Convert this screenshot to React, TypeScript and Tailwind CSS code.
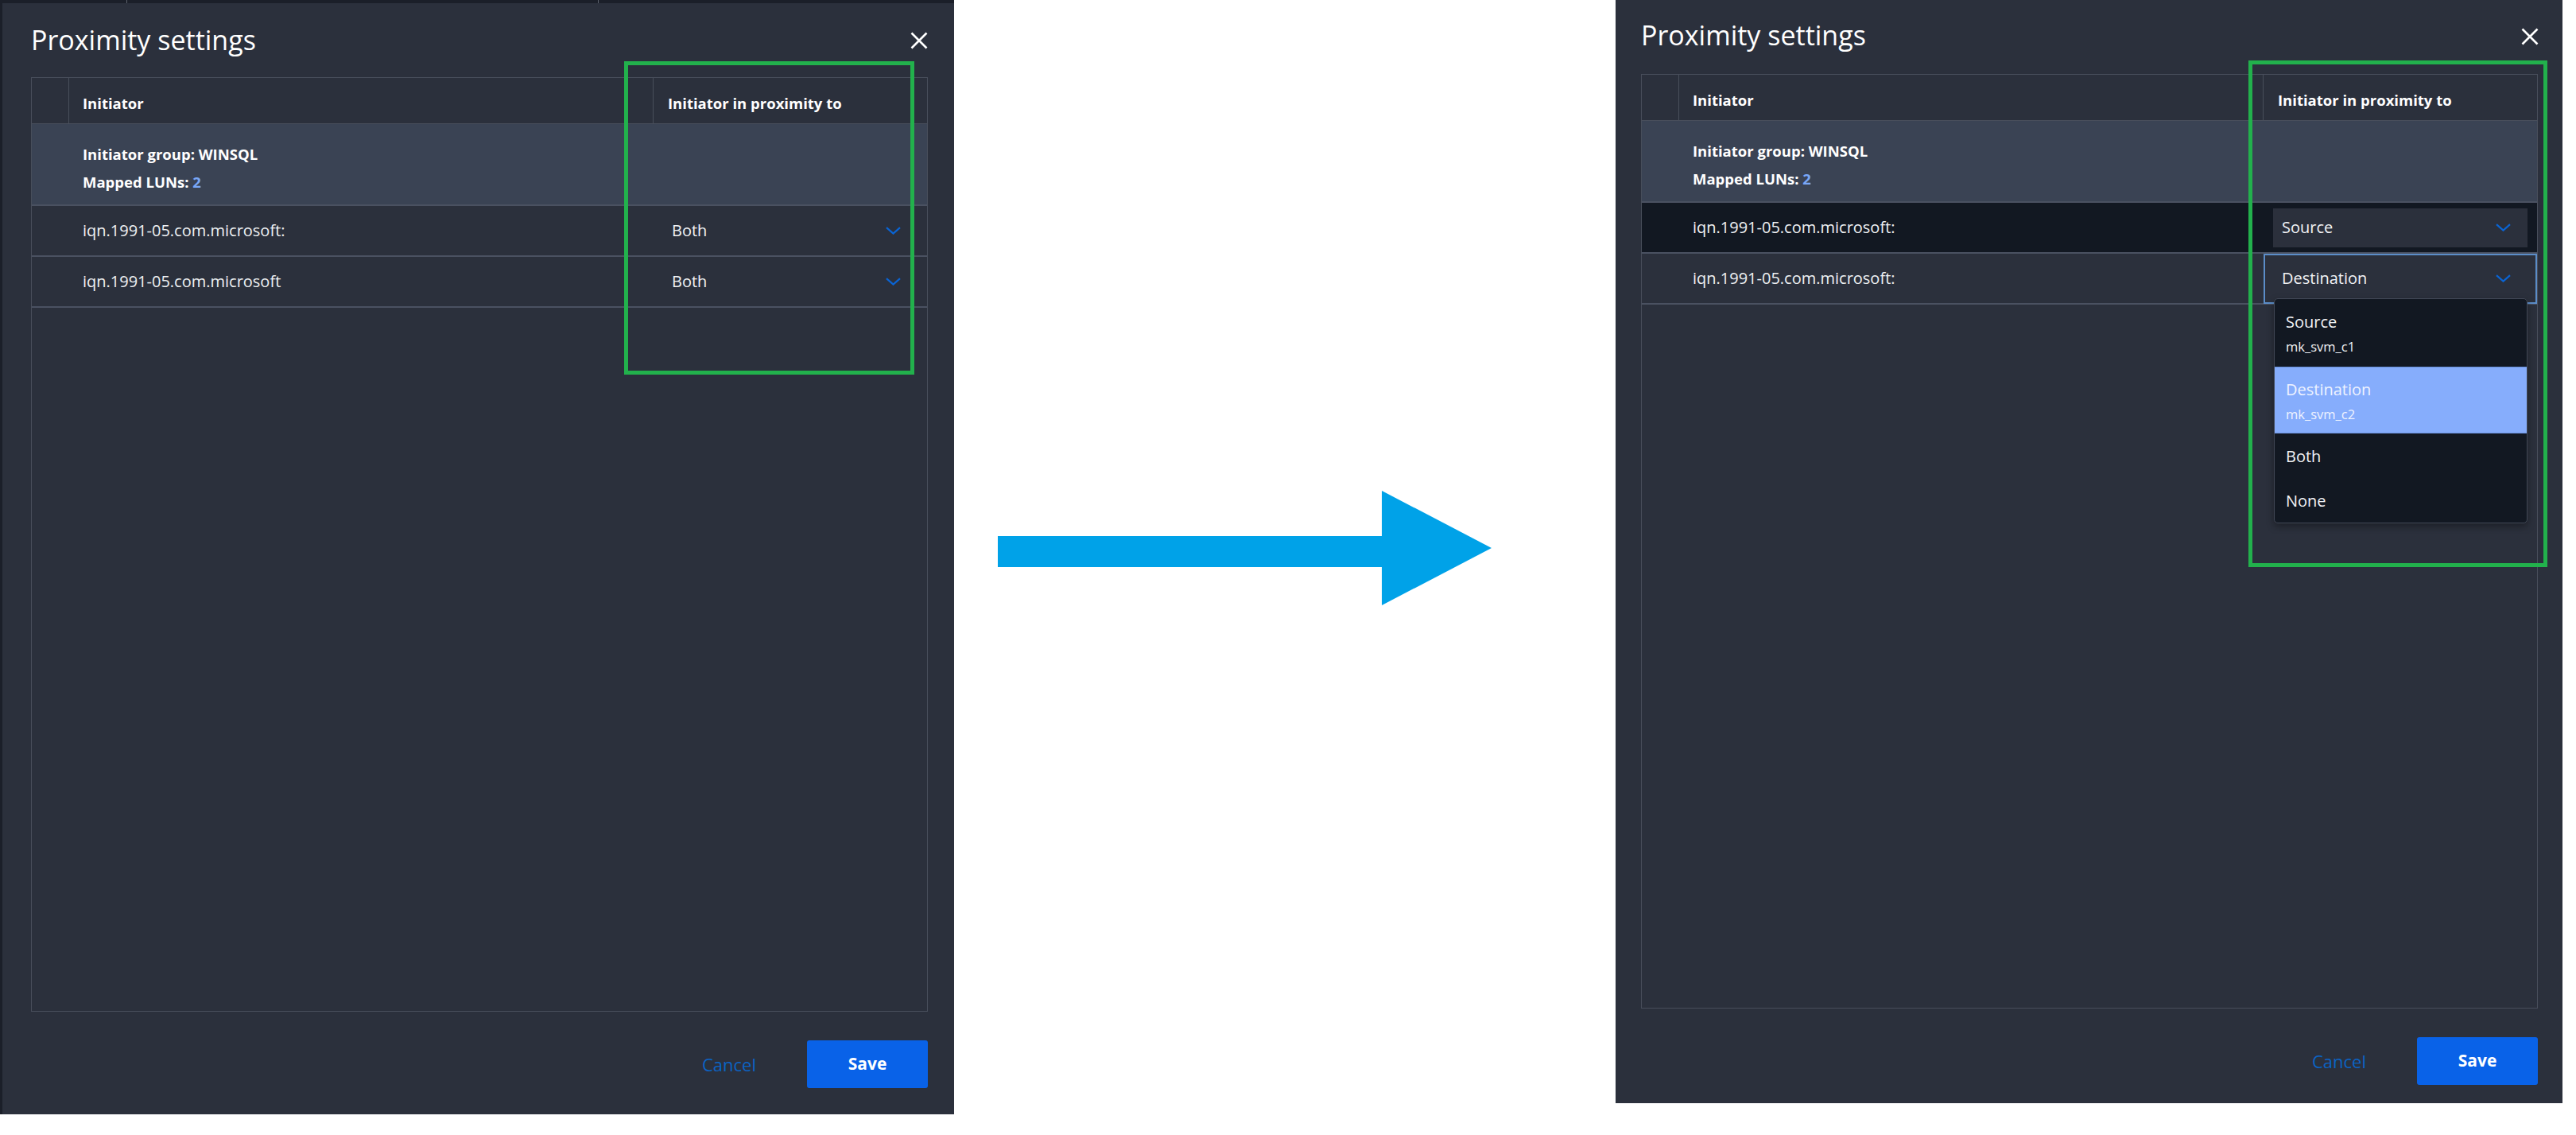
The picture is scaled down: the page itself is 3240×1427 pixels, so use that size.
import React from 'react';

type Side = 'left' | 'right';

interface RowData {
  iqn: string;
  value: string;
  dark?: boolean;
  boxed?: boolean;
  focused?: boolean;
  open?: boolean;
}

// iqn names are cut by the column in the original, only the visible part is kept
const leftRows: RowData[] = [
  { iqn: 'iqn.1991-05.com.microsoft:', value: 'Both' },
  { iqn: 'iqn.1991-05.com.microsoft', value: 'Both' },
];

const rightRows: RowData[] = [
  { iqn: 'iqn.1991-05.com.microsoft:', value: 'Source', dark: true, boxed: true },
  { iqn: 'iqn.1991-05.com.microsoft:', value: 'Destination', focused: true, open: true },
];

const options = [
  { label: 'Source', sub: 'mk_svm_c1' },
  { label: 'Destination', sub: 'mk_svm_c2', active: true },
  { label: 'Both' },
  { label: 'None' },
];

const Chevron = () => (
  <svg width="19" height="10" viewBox="0 0 19 10" fill="none">
    <path d="M1 1.2 L9.5 8.6 L18 1.2" stroke="#0a64d4" strokeWidth="2.2" />
  </svg>
);

const CloseIcon = () => (
  <svg width="22" height="22" viewBox="0 0 22 22" fill="none">
    <path d="M1.5 1.5 L20.5 20.5 M20.5 1.5 L1.5 20.5" stroke="#ffffff" strokeWidth="2.6" />
  </svg>
);

const Dropdown = () => (
  <div className="absolute left-[13px] top-[56px] z-10 w-[319px] overflow-hidden rounded-[5px] border border-[#414856] bg-[#121822] shadow-[0_4px_10px_rgba(0,0,0,0.35)]">
    {options.map((o) => (
      <div
        key={o.label}
        className={
          o.active
            ? 'h-[84px] border-y border-[#6a91dc] bg-[#86adfc] pl-[14px] pt-[16px] text-[#eef3ff]'
            : o.sub
              ? 'h-[85px] pl-[14px] pt-[17px] text-[#f1f3f6]'
              : 'h-[56px] pl-[14px] pt-[17px] text-[#f1f3f6]'
        }
      >
        <div className="text-[20px] leading-[24px]">{o.label}</div>
        {o.sub && <div className="mt-[8px] text-[16.5px] leading-[22px]">{o.sub}</div>}
      </div>
    ))}
  </div>
);

const Row = ({ row }: { row: RowData }) => (
  <div className={`flex h-[64px] border-b-2 border-[#4a5161] ${row.dark ? 'bg-[#121822]' : ''}`}>
    <div className="w-[47px]" />
    <div className="flex w-[735px] items-center pl-[17px]">
      <span className="whitespace-nowrap text-[20px] text-[#eef0f3]">{row.iqn}</span>
    </div>
    <div className="relative flex flex-1 items-center">
      {row.focused && <div className="absolute -bottom-[1px] left-0 right-0 top-0 border-2 border-[#5b8dc8]" />}
      <div
        className={`mx-[12px] flex h-[49px] flex-1 items-center justify-between pl-[11px] pr-[21px] ${row.boxed ? 'bg-[#2b303c]' : ''}`}
      >
        <span className="text-[20px] text-[#f1f3f6]">{row.value}</span>
        <Chevron />
      </div>
      {row.open && <Dropdown />}
    </div>
  </div>
);

const Modal = ({ side }: { side: Side }) => {
  const left = side === 'left';
  const rows = left ? leftRows : rightRows;
  return (
    <div
      className={
        left
          ? 'h-[1397px] w-[1197px] bg-[#2b303c] pl-[36px] pr-[33px]'
          : 'h-[1387px] w-[1191px] bg-[#2b303c] pl-[32px] pr-[31px]'
      }
    >
      <div className="flex h-[93px] items-start justify-between">
        <h2 className={`${left ? 'mt-[29px]' : 'mt-[27px]'} text-[34px] leading-[34px] text-white`}>Proximity settings</h2>
        <button className={left ? 'mt-[36px]' : 'mt-[35px] mr-[-1px]'} aria-label="Close">
          <CloseIcon />
        </button>
      </div>

      <div className="flex h-[1175px] w-[1128px] flex-col border border-[#484e5b]">
        <div className="flex h-[58px] border-b border-[#484e5b] text-[18.5px] font-bold text-white">
          <div className="w-[47px] border-r border-[#484e5b]" />
          <div className="flex w-[735px] items-center border-r border-[#484e5b] pl-[17px] pt-[6px]">Initiator</div>
          <div className="flex flex-1 items-center pl-[18px] pt-[6px]">Initiator in proximity to</div>
        </div>

        <div className="h-[103px] border-b-2 border-[#4a5161] bg-[#3a4354] pl-[64px] pt-[20px] text-[18.5px] font-bold leading-[35px] text-white">
          <div>Initiator group: WINSQL</div>
          <div>
            Mapped LUNs: <span className="text-[#79a7f7]">2</span>
          </div>
        </div>

        {rows.map((r, i) => (
          <Row key={i} row={r} />
        ))}
      </div>

      <div className="mt-[36px] flex items-center justify-end gap-[64px]">
        <button className="text-[22px] text-[#0b63c4]">Cancel</button>
        <button className="h-[60px] w-[152px] rounded-[3px] bg-[#0962e8] text-[21px] font-bold text-white">Save</button>
      </div>
    </div>
  );
};

export default function App() {
  return (
    <div className="flex h-[1427px] w-[3240px] items-start bg-white font-['Open_Sans',sans-serif]">
      <div className="relative h-[1401px] w-[1200px] bg-[#1b1f29]">
        <div className="flex h-[4px]">
          <div className="ml-[159px] w-[1px] bg-[#5d626d]" />
          <div className="ml-[592px] w-[1px] bg-[#5d626d]" />
        </div>
        <div className="ml-[3px]">
          <Modal side="left" />
        </div>
        <div className="absolute left-[785px] top-[77px] h-[394px] w-[365px] border-[5px] border-[#22b14c]" />
      </div>

      <div className="w-[832px] pl-[55px] pt-[617px]">
        <svg width="621" height="144" viewBox="0 0 621 144">
          <rect x="0" y="57" width="484" height="39" fill="#00a2e8" />
          <polygon points="483,0 621,72 483,144" fill="#00a2e8" />
        </svg>
      </div>

      <div className="relative">
        <Modal side="right" />
        <div className="absolute left-[796px] top-[76px] h-[637px] w-[376px] border-[5px] border-[#22b14c]" />
      </div>
    </div>
  );
}
